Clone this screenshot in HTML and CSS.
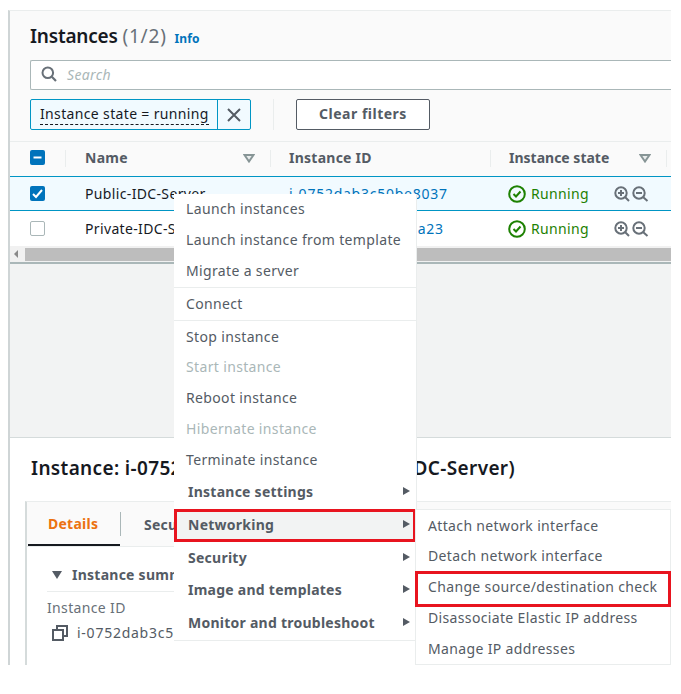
FILE: index.html
```html
<!DOCTYPE html>
<html lang="en">
<head>
    <meta charset="UTF-8">
    <meta name="viewport" content="width=device-width, initial-scale=1.0">
    <title>Instances</title>
    <link rel="stylesheet" href="styles.css">
</head>
<body>
    <div class="console">
        <div class="list-panel">
            <div class="list-header">
                <h1 class="title">Instances <span class="count">(1/2)</span> <a class="info">Info</a></h1>
                <div class="search">
                    <svg class="search-icon" viewBox="0 0 16 16" width="16" height="16"><circle cx="6.8" cy="6.8" r="5.3" fill="none" stroke="#687078" stroke-width="2"/><path d="M10.8 10.8 L15 15" stroke="#687078" stroke-width="2.2" fill="none"/></svg>
                    <span class="search-hint">Search</span>
                </div>
                <div class="filters">
                    <div class="token">
                        <span class="token-label"><span class="token-text">Instance state = running</span></span>
                        <span class="token-close">
                            <svg viewBox="0 0 14 14" width="14" height="14"><path d="M1 1 L13 13 M13 1 L1 13" stroke="#545b64" stroke-width="2" fill="none"/></svg>
                        </span>
                    </div>
                    <span class="filter-sep"></span>
                    <button class="clear-btn">Clear filters</button>
                </div>
            </div>

            <div class="table-head">
                <div class="cell cell-check">
                    <span class="check check-on"><svg viewBox="0 0 15 15" width="15" height="15"><path d="M3.5 7.5 H11.5" stroke="#fff" stroke-width="2"/></svg></span>
                </div>
                <div class="cell cell-name">Name<svg class="sort" viewBox="0 0 12 9" width="12" height="9"><path d="M1.5 1 H10.5 L6 7.5 Z" fill="#eaeded" stroke="#879596" stroke-width="2"/></svg></div>
                <div class="cell cell-id">Instance ID</div>
                <div class="cell cell-state">Instance state<svg class="sort" viewBox="0 0 12 9" width="12" height="9"><path d="M1.5 1 H10.5 L6 7.5 Z" fill="#eaeded" stroke="#879596" stroke-width="2"/></svg></div>
            </div>

            <div class="row row-selected">
                <div class="cell cell-check">
                    <span class="check check-on"><svg viewBox="0 0 15 15" width="15" height="15"><path d="M3 8 L6 11 L12 4" stroke="#fff" stroke-width="2" fill="none"/></svg></span>
                </div>
                <div class="cell cell-name">Public-IDC-Server</div>
                <div class="cell cell-id"><a class="link">i-0752dab3c50be8037</a></div>
                <div class="cell cell-state">
                    <svg class="ok-icon" viewBox="0 0 18 18" width="18" height="18"><circle cx="9" cy="9" r="7.8" fill="none" stroke="#1d8102" stroke-width="2"/><path d="M5.5 9 L8 11.5 L12.5 6.5" fill="none" stroke="#1d8102" stroke-width="2"/></svg>
                    <span class="running">Running</span>
                    <svg class="zoom-icons" viewBox="0 0 35 16" width="35" height="16"><circle cx="7" cy="7" r="5.7" fill="none" stroke="#687078" stroke-width="2"/><path d="M11 11 L15 15 M4 7 H10 M7 4 V10 M29 11 L33.5 15 M22 7 H28" stroke="#687078" stroke-width="2" fill="none"/><circle cx="25" cy="7" r="5.7" fill="none" stroke="#687078" stroke-width="2"/></svg>
                </div>
            </div>

            <div class="row">
                <div class="cell cell-check"><span class="check"></span></div>
                <div class="cell cell-name">Private-IDC-Server</div>
                <div class="cell cell-id"><a class="link">i-0a1f4c07d2e96ba23</a></div>
                <div class="cell cell-state">
                    <svg class="ok-icon" viewBox="0 0 18 18" width="18" height="18"><circle cx="9" cy="9" r="7.8" fill="none" stroke="#1d8102" stroke-width="2"/><path d="M5.5 9 L8 11.5 L12.5 6.5" fill="none" stroke="#1d8102" stroke-width="2"/></svg>
                    <span class="running">Running</span>
                    <svg class="zoom-icons" viewBox="0 0 35 16" width="35" height="16"><circle cx="7" cy="7" r="5.7" fill="none" stroke="#687078" stroke-width="2"/><path d="M11 11 L15 15 M4 7 H10 M7 4 V10 M29 11 L33.5 15 M22 7 H28" stroke="#687078" stroke-width="2" fill="none"/><circle cx="25" cy="7" r="5.7" fill="none" stroke="#687078" stroke-width="2"/></svg>
                </div>
            </div>

            <div class="scrollbar">
                <span class="scroll-arrow"></span>
                <span class="scroll-thumb"></span>
            </div>
        </div>

        <div class="empty-area"></div>

        <div class="detail-panel">
            <h2 class="detail-title">Instance: i-0752dab3c50be8037 (Public-IDC-Server)</h2>
            <div class="tabs-box">
                <div class="tabs">
                    <span class="tab tab-active">Details</span>
                    <span class="tab-sep"></span>
                    <span class="tab">Security</span>
                </div>
                <div class="summary">
                    <div class="summary-head"><i class="caret"></i>Instance summary</div>
                    <div class="field-label">Instance ID</div>
                    <div class="field-value">
                        <svg viewBox="0 0 16 16" width="16" height="16"><rect x="1" y="5" width="10" height="10" fill="none" stroke="#545b64" stroke-width="2"/><path d="M5 4 V1 H15 V11 H12" fill="none" stroke="#545b64" stroke-width="2"/></svg>
                        <span>i-0752dab3c50be8037</span>
                    </div>
                </div>
            </div>
        </div>
    </div>

    <div class="menu">
        <div class="menu-group">
            <div class="menu-item">Launch instances</div>
            <div class="menu-item">Launch instance from template</div>
            <div class="menu-item">Migrate a server</div>
        </div>
        <div class="menu-group">
            <div class="menu-item">Connect</div>
        </div>
        <div class="menu-group">
            <div class="menu-item">Stop instance</div>
            <div class="menu-item disabled">Start instance</div>
            <div class="menu-item">Reboot instance</div>
            <div class="menu-item disabled">Hibernate instance</div>
            <div class="menu-item">Terminate instance</div>
            <div class="menu-item parent">Instance settings</div>
            <div class="menu-item parent marked">Networking</div>
            <div class="menu-item parent parent-short">Security</div>
            <div class="menu-item parent">Image and templates</div>
            <div class="menu-item parent">Monitor and troubleshoot</div>
        </div>
    </div>

    <div class="menu submenu">
        <div class="menu-item">Attach network interface</div>
        <div class="menu-item">Detach network interface</div>
        <div class="menu-item marked">Change source/destination check</div>
        <div class="menu-item">Disassociate Elastic IP address</div>
        <div class="menu-item">Manage IP addresses</div>
    </div>
</body>
</html>
```

FILE: styles.css
```css
* {
    box-sizing: border-box;
}

body {
    margin: 0;
    background: #fff;
    font-family: "Noto Sans", Arial, sans-serif;
    font-size: 14px;
    letter-spacing: 0.35px;
    color: #16191f;
}

.console {
    width: 663px;
    height: 655px;
    margin: 10px 0 0 8px;
    border-left: 2px solid #cfd5d6;
    border-top: 1px solid #eaeded;
    overflow: hidden;
    display: flex;
    flex-direction: column;
}

.list-panel {
    flex-shrink: 0;
    background: #fff;
}

.list-header {
    height: 131px;
    padding: 12px 0 0 20px;
    background: #fafafa;
    border-bottom: 1px solid #eaeded;
}

.title {
    margin: 0 0 10px;
    height: 27px;
    line-height: 27px;
    font-size: 19px;
    font-weight: 600;
    letter-spacing: -0.2px;
    white-space: nowrap;
}

.count {
    font-weight: 400;
    letter-spacing: 0.8px;
    color: #687078;
}

.info {
    margin-left: 3px;
    font-size: 12px;
    font-weight: 700;
    letter-spacing: 0.2px;
    color: #0073bb;
}

.search {
    display: flex;
    align-items: center;
    gap: 10px;
    height: 30px;
    padding: 0 0 2px 10px;
    background: #fff;
    border: 1px solid #aab7b8;
    border-right: none;
    border-radius: 2px 0 0 2px;
}

.search-hint {
    font-style: italic;
    color: #aab7b8;
}

.filters {
    display: flex;
    align-items: center;
    margin-top: 9px;
}

.token {
    display: flex;
    width: 221px;
    height: 31px;
    background: #f1faff;
    border: 1px solid #0095c4;
    border-radius: 2px;
}

.token-label {
    flex: 1;
    padding-left: 9px;
    line-height: 27px;
    white-space: nowrap;
}

.token-text {
    padding-bottom: 1px;
    border-bottom: 1px dashed #16191f;
}

.token-close {
    display: flex;
    align-items: center;
    justify-content: center;
    width: 33px;
    flex-shrink: 0;
    border-left: 1px solid #0095c4;
}

.filter-sep {
    width: 1px;
    height: 31px;
    margin: 0 22px;
    background: #eaeded;
}

.clear-btn {
    width: 134px;
    height: 31px;
    padding: 0 0 2px;
    background: #fff;
    border: 1px solid #545b64;
    border-radius: 2px;
    font: 700 14px "Noto Sans", Arial, sans-serif;
    letter-spacing: 0.5px;
    color: #545b64;
}

.table-head {
    display: flex;
    height: 34px;
    background: #fafafa;
    font-weight: 700;
    letter-spacing: 0.25px;
    color: #545b64;
}

.table-head .cell {
    padding-bottom: 3px;
}

.table-head .cell-state {
    padding-left: 18px;
    letter-spacing: 0;
}

.row {
    display: flex;
    height: 35px;
    background: #fff;
}

.row-selected {
    background: #f1faff;
    border-top: 1px solid #0095c4;
    border-bottom: 1px solid #0095c4;
}

.cell {
    display: flex;
    align-items: center;
    position: relative;
    white-space: nowrap;
}

.cell-check {
    width: 56px;
    padding-left: 20px;
}

.cell-name {
    width: 205px;
    padding-left: 19px;
}

.cell-id {
    width: 220px;
    padding-left: 18px;
}

.cell-state {
    width: 176px;
    padding-left: 17px;
}

.table-head .cell::after {
    content: "";
    position: absolute;
    right: 0;
    top: 8px;
    width: 1px;
    height: 17px;
    background: #eaeded;
}

.sort {
    position: absolute;
    right: 16px;
    top: 12px;
}

.check {
    display: block;
    width: 15px;
    height: 15px;
    background: #fff;
    border: 1px solid #aab7b8;
    border-radius: 2px;
}

.check-on {
    background: #0073bb;
    border: none;
}

.check svg {
    display: block;
}

.link {
    letter-spacing: 0.75px;
    color: #0073bb;
}

.running {
    margin-left: 5px;
    color: #1d8102;
}

.zoom-icons {
    margin-left: 25px;
}

.scrollbar {
    display: flex;
    align-items: center;
    height: 18px;
    background: #f1f1f1;
    border-bottom: 2px solid #aab7b8;
}

.scroll-arrow {
    width: 0;
    height: 0;
    margin-left: 4px;
    border-top: 4px solid transparent;
    border-bottom: 4px solid transparent;
    border-right: 4px solid #8a8a8a;
}

.scroll-thumb {
    flex: 1;
    height: 13px;
    margin-left: 7px;
    background: #bdbdbd;
}

.empty-area {
    flex-shrink: 0;
    height: 174px;
    background: #f2f3f3;
    border-bottom: 1px solid #d5dbdb;
}

.detail-panel {
    flex: 1;
    min-height: 0;
    padding: 17px 0 0 21px;
    background: #fff;
}

.detail-title {
    margin: 0 0 19px;
    height: 27px;
    line-height: 27px;
    font-size: 19px;
    font-weight: 600;
    letter-spacing: 0.35px;
    white-space: nowrap;
}

.tabs-box {
    margin-left: -6px;
    height: 200px;
    border-left: 2px solid #d5dbdb;
    border-top: 1px solid #eaeded;
}

.tabs {
    display: flex;
    align-items: center;
    height: 45px;
    background: #fafafa;
    border-bottom: 1px solid #eaeded;
    font-weight: 700;
    letter-spacing: 0.25px;
    color: #545b64;
}

.tab {
    padding-left: 21px;
}

.tab-active {
    width: 92px;
    height: 44px;
    margin-left: 1px;
    line-height: 44px;
    padding-left: 20px;
    color: #ec7211;
    border-bottom: 2px solid #16191f;
}

.tab-sep {
    width: 1px;
    height: 24px;
    margin-right: 2px;
    background: #aab7b8;
}

.summary {
    padding: 17px 0 0 20px;
}

.summary-head {
    display: flex;
    align-items: center;
    height: 28px;
    padding: 0 0 6px 5px;
    font-weight: 700;
    letter-spacing: 0.25px;
    color: #545b64;
    border-bottom: 1px solid #eaeded;
    white-space: nowrap;
}

.caret {
    width: 0;
    height: 0;
    margin-right: 10px;
    border-left: 5px solid transparent;
    border-right: 5px solid transparent;
    border-top: 8px solid #545b64;
}

.field-label {
    margin-top: 6px;
    line-height: 20px;
    color: #687078;
}

.field-value {
    display: flex;
    align-items: center;
    gap: 9px;
    margin: 5px 0 0 5px;
    color: #545b64;
    letter-spacing: 0.75px;
    white-space: nowrap;
}

.menu {
    position: absolute;
    left: 174px;
    top: 194px;
    width: 243px;
    height: 447px;
    background: #fff;
    border-bottom: 1px solid #eaeded;
    border-right: 1px solid #eaeded;
}

.menu-group + .menu-group {
    border-top: 1px solid #eaeded;
}

.menu-group:first-child {
    height: 93px;
}

.menu-item {
    position: relative;
    height: 31px;
    padding-left: 12px;
    line-height: 30px;
    color: #545b64;
    white-space: nowrap;
}

.menu-group:nth-child(2) .menu-item {
    height: 32px;
    line-height: 32px;
}

.menu-group:nth-child(3) .menu-item:first-child {
    line-height: 32px;
}

.disabled {
    color: #aab7b8;
}

.parent {
    height: 33px;
    padding-left: 14px;
    line-height: 31px;
    font-weight: 700;
    letter-spacing: 0.25px;
}

.parent-short {
    height: 32px;
}

.parent::after {
    content: "";
    position: absolute;
    right: 6px;
    top: 11px;
    border-top: 4px solid transparent;
    border-bottom: 4px solid transparent;
    border-left: 7px solid #545b64;
}

.marked {
    background: #f2f3f3;
    outline: 3px solid #e8141f;
    outline-offset: -3px;
}

.submenu {
    left: 415px;
    top: 509px;
    width: 256px;
    height: 156px;
    border: 1px solid #eaeded;
}

.submenu .menu-item {
    padding-left: 12px;
    line-height: 31px;
}

.submenu .menu-item:first-child {
    height: 30px;
}

.submenu .marked {
    height: 36px;
    margin: 0 -1px -5px;
    padding-left: 13px;
    line-height: 32px;
    background: #fff;
}
```
